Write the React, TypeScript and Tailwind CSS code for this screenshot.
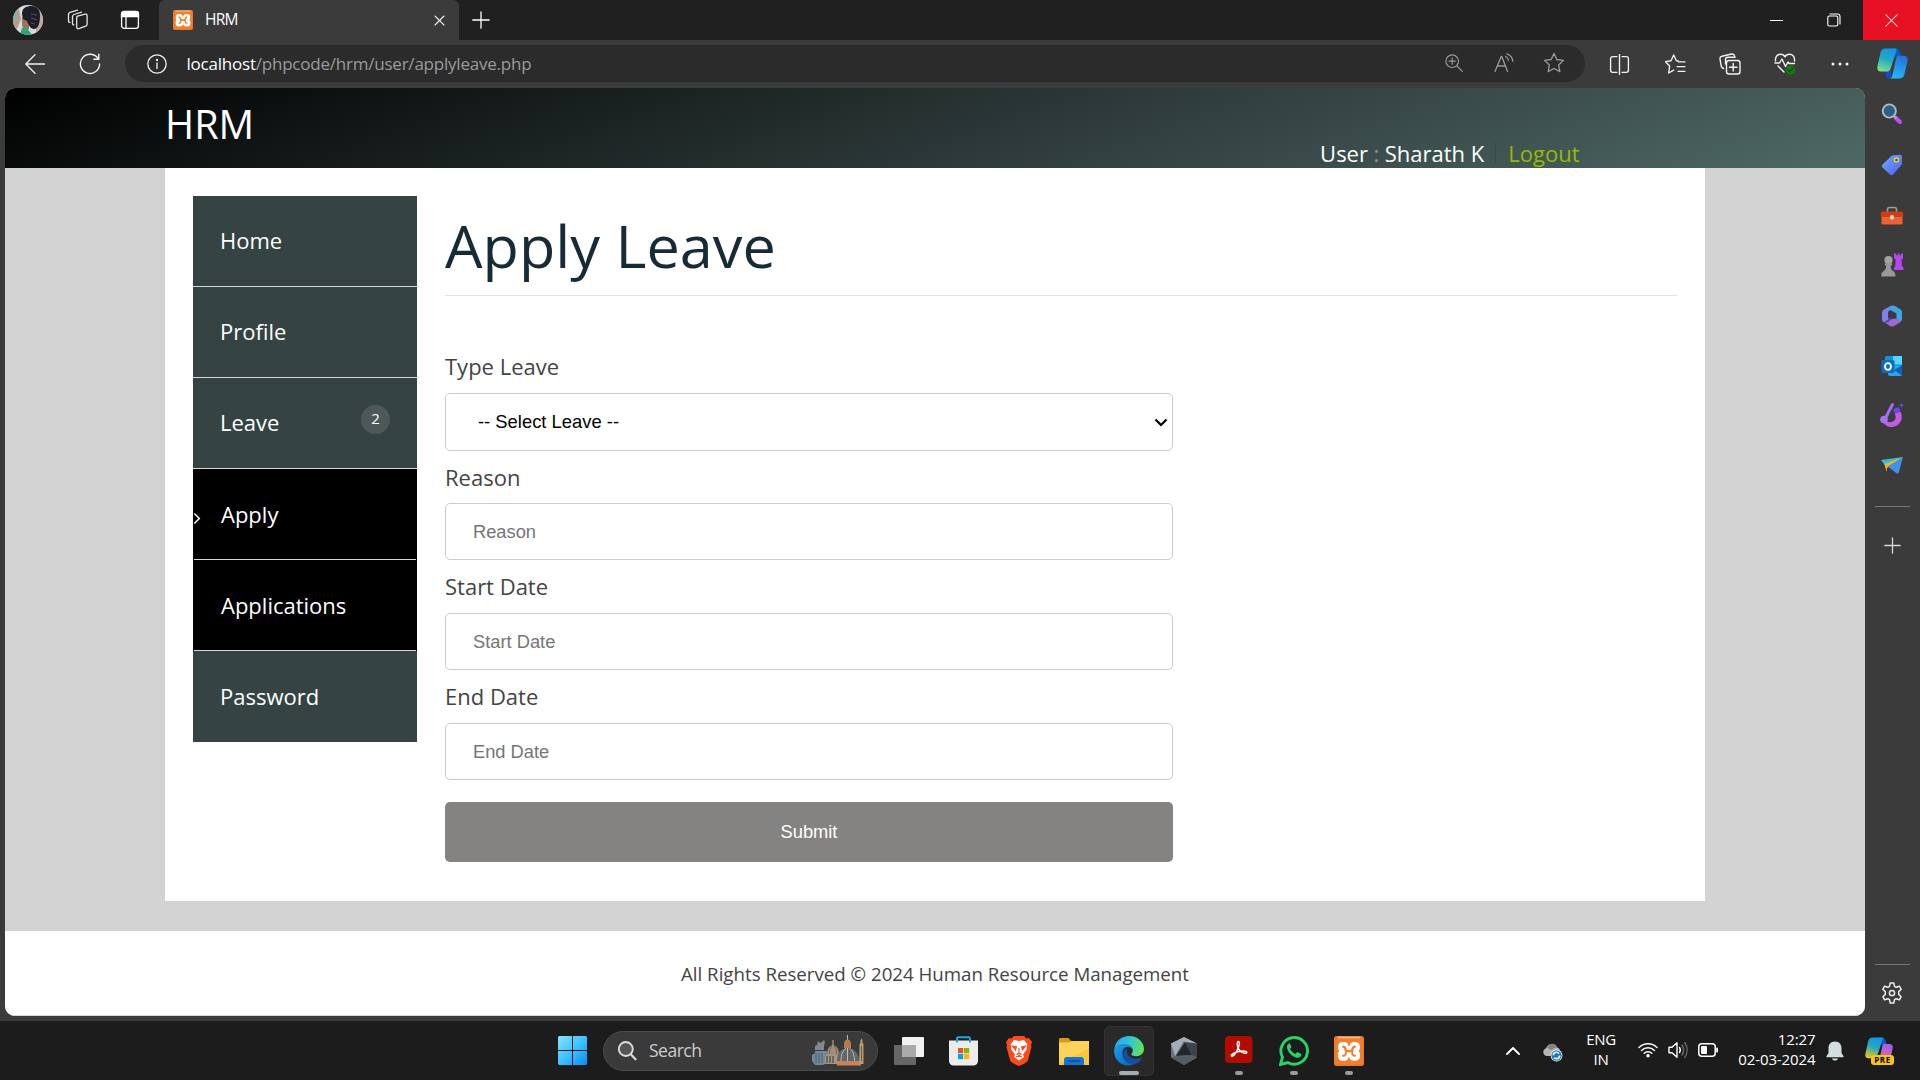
import React from "react";
import type { ReactNode } from "react";

const UI = "font-['Open_Sans','Noto_Sans',sans-serif]";

function Line({ size = 20, w = 1.2, vb = 20, className = "", children }: { size?: number; w?: number; vb?: number; className?: string; children: ReactNode }) {
  return (
    <svg width={size} height={size} viewBox={`0 0 ${vb} ${vb}`} fill="none" stroke="currentColor" strokeWidth={w} strokeLinecap="round" strokeLinejoin="round" className={`shrink-0 ${className}`}>
      {children}
    </svg>
  );
}

function XamppLogo({ size }: { size: number }) {
  return (
    <svg width={size} height={size} viewBox="0 0 30 30" className="shrink-0">
      <rect width="30" height="30" rx="2.5" fill="#e8762b" />
      <rect x="3.5" y="0.6" width="23" height="2" rx="1" fill="#f6b184" />
      <rect x="1.2" y="3" width="27.6" height="25.4" rx="2" fill="#f07f2e" />
      <g fill="#fff">
        <rect x="4.200" y="6" width="10.300" height="10.500" rx="4.500" />
        <rect x="15.500" y="6" width="10.300" height="10.500" rx="4.500" />
        <rect x="4" y="13.700" width="10.800" height="11" rx="4.500" />
        <rect x="15.200" y="13.700" width="10.800" height="11" rx="4.500" />
        <rect x="10" y="10" width="10" height="11" />
      </g>
      <g fill="none" stroke="#f07f2e" strokeWidth="2.300" strokeLinecap="round" strokeLinejoin="round">
        <path d="M9.300 10.700c1.700.3 2.500 1.600 2.500 4.500h6.400c0-2.900.8-4.200 2.500-4.500" />
        <path d="M9 19.700c1.800.2 2.800-.8 2.800-3M21 19.700c-1.800.2-2.800-.8-2.800-3" strokeWidth="2" />
      </g>
    </svg>
  );
}

function Avatar() {
  return (
    <svg width="30" height="30" viewBox="0 0 30 30" className="shrink-0">
      <defs><clipPath id="av"><circle cx="15" cy="15" r="15" /></clipPath></defs>
      <g clipPath="url(#av)">
        <rect width="30" height="30" fill="#d5dcd8" />
        <path d="M5 0l3 14-4 10L0 20V4z" fill="#b99a86" />
        <path d="M24 2l6 4v20l-7 2z" fill="#bfa79c" />
        <path d="M1 6h3v9H1z" fill="#7db1bd" />
        <path d="M9 12h7v12l-5 2-2-6z" fill="#a2705c" />
        <path d="M9 9C9 3 13 1 19 1c6 0 8 4 8 10 0 7-2 13-6 13-3 0-5-3-7-8l-4-2z" fill="#1f1d28" />
        <path d="M18 9l6 1M18 13l6 2M18 18l4 1" stroke="#54505d" strokeWidth="1" />
        <path d="M7 30l2-7 4-1 4 5 2 3z" fill="#2ba877" />
      </g>
    </svg>
  );
}

function CopilotIcon({ size, pre = false }: { size: number; pre?: boolean }) {
  const id = pre ? "cpb" : "cpa";
  return (
    <svg width={size} height={size} viewBox="0 0 30 30" className="shrink-0">
      <defs>
        <linearGradient id={`${id}1`} x1="0.6" y1="0" x2="0.3" y2="1">
          <stop offset="0" stopColor="#1596e0" /><stop offset=".45" stopColor="#22a8c4" /><stop offset="1" stopColor={pre ? "#f0c419" : "#7be08b"} />
        </linearGradient>
        <linearGradient id={`${id}2`} x1="0.6" y1="0" x2="0.3" y2="1">
          <stop offset="0" stopColor={pre ? "#a65cf0" : "#2471dd"} /><stop offset="1" stopColor={pre ? "#f4727c" : "#22baf8"} />
        </linearGradient>
      </defs>
      <path d="M14 .5h4.500c2.200 0 3 1.500 3.600 3.500L23.500 8.500H18z" fill="#0d57c4" />
      <path d="M8 22h6l-1 7.500c-3 0-3.800-1.300-4.300-3z" fill={pre ? "#e8a61c" : "#1746d2"} />
      <path d="M8 .5h9.500c1.600 0 1.600 1.200 1.200 2.500L13.300 19.500c-.7 2.200-1.800 3.300-3.800 3.300H3.800C1.200 22.800-.2 21 .4 18L3.400 4.500C4 2 5.500.5 8 .5z" fill={`url(#${id}1)`} />
      <path d="M20.500 7.500h5.700c2.600 0 4 1.800 3.400 4.800L26.600 25.500c-.6 2.500-2.100 4-4.600 4h-9.500c1.400-.5 2-1.500 2.400-3L18.500 10c.4-1.500.8-2.500 2-2.500z" fill={`url(#${id}2)`} />
    </svg>
  );
}

function TitleBar() {
  return (
    <div className="flex h-10 bg-[#202020] text-white">
      <div className="flex w-[159px] items-center">
        <div className="ml-[13px]"><Avatar /></div>
        <Line size={22} vb={22} w={1.3} className="ml-[23.5px] text-[#e4e4e4]">
          <path d="M10.500 7.200l7.600-2.100c1.200-.3 2 .4 2 1.500v8.600c0 1-.5 1.700-1.500 2l-6.700 2.500c-1.200.4-2.200-.3-2.200-1.500V9c0-1 .3-1.600.8-1.800z" />
          <path d="M7 15.800c-1 .1-1.500-.5-1.500-1.600V7.500c0-1 .5-1.700 1.500-2l7.500-2.400" />
          <path d="M3 13.400c-1 0-1.500-.5-1.500-1.500V5.300c0-1 .5-1.700 1.500-2l7.500-2.100" />
        </Line>
        <svg width="20" height="20" viewBox="0 0 20 20" fill="none" stroke="#fff" strokeWidth="1.300" className="ml-[31px]">
          <rect x="1.600" y="1.600" width="16.800" height="16.800" rx="2.600" />
          <path d="M1.500 6.500V4a2.500 2.500 0 0 1 2.500-2.500h12A2.500 2.500 0 0 1 18.500 4v2.500z" fill="#fff" />
          <path d="M6 7v11" />
        </svg>
      </div>
      <div className="flex w-[300px] items-center rounded-t-[6px] bg-[#3b3b3b] pl-[14px]">
        <XamppLogo size={20} />
        <span className="mb-[2px] ml-[12px] flex-1 text-[15.500px] leading-5 tracking-[-0.800px]">HRM</span>
        <Line size={11} vb={12} w={1.4} className="mr-[14.500px] mt-[1px]"><path d="M1.200 1.200l9.600 9.600M10.800 1.200L1.200 10.800" /></Line>
      </div>
      <div className="flex flex-1 items-center pl-[12.500px]">
        <Line size={18} vb={18} w={1.3}><path d="M9 .8v16.400M.8 9h16.400" /></Line>
      </div>
      <div className="flex w-[57px] items-center justify-center"><div className="mr-[2px] h-px w-[13px] bg-white" /></div>
      <div className="flex w-[57px] items-center justify-center">
        <Line size={14} vb={14} w={1.1} className="mr-[2px]"><rect x=".8" y="3" width="10" height="10" rx="1.500" /><path d="M3 1h7.500A2.500 2.500 0 0 1 13 3.500V11" /></Line>
      </div>
      <div className="flex w-[57px] items-center justify-center bg-[#e81123]">
        <Line size={13} vb={14} w={1.1} className="mr-px"><path d="M.8.800l12.400 12.400M13.200.800L.8 13.200" /></Line>
      </div>
    </div>
  );
}

const Star = "M10 1.300l2.600 5.500 6 .8-4.400 4.200 1.100 6L10 15l-5.300 2.800 1.100-6L1.400 7.600l6-.8z";

function ToolBar() {
  return (
    <div className="flex h-12 items-center text-[#f2f2f2]">
      <div className="flex w-[70px] justify-center">
        <Line size={20} w={1.300}><path d="M19.500 10H.8M10 .8L.8 10l9.200 9.200" /></Line>
      </div>
      <div className="mr-[15px] flex w-[40px] justify-center">
        <Line size={22} vb={22} w={1.400}><path d="M19.300 6A9.600 9.600 0 1 0 20.600 11M19.800 1.300v5h-5" /></Line>
      </div>
      <div className="mt-[-2px] flex h-[37px] w-[1460px] items-center rounded-full bg-[#2b2b2b]">
        <Line size={20} w={1.300} className="ml-[22px] mt-[1px]"><circle cx="10" cy="10" r="9.200" /><path d="M10 9v5.500" /><circle cx="10" cy="6" r=".5" fill="currentColor" /></Line>
        <div className="ml-[19.500px] mt-[1px] flex-1 text-[17px] leading-6 tracking-[-0.220px] text-[#9b9b9b]">
          <span className="text-white">localhost</span>/phpcode/hrm/user/applyleave.php
        </div>
        <div className="flex w-[50px] justify-center text-[#9a9a9a]"><Line size={18} vb={20} w={1.300}><circle cx="8" cy="8" r="7" /><path d="M13.300 13.300l6 6M8 4.500v7M4.500 8h7" /></Line></div>
        <div className="flex w-[50px] justify-center text-[#9a9a9a]"><Line size={20} w={1.300}><path d="M1 18.500L7.200 3.500h.6L13.500 18.500M3.200 13h8.500M11.500 3.500c1.800.8 2.600 2 2.800 3.800M13 .8c3.400 1.200 5.400 3.800 5.800 7.500" /></Line></div>
        <div className="mr-[6px] flex w-[50px] justify-center text-[#9a9a9a]"><Line size={22} w={1.200}><path d={Star} /></Line></div>
      </div>
      <div className="ml-[6.500px] flex w-[56px] justify-center"><Line size={21} w={1.300}><path d="M7.500 2.500H3.500a2 2 0 0 0-2 2v11a2 2 0 0 0 2 2h4M12.500 2.500h4a2 2 0 0 1 2 2v11a2 2 0 0 1-2 2h-4M10 .5v19" /></Line></div>
      <div className="flex w-[55px] justify-center"><Line size={21} w={1.300}><path d="M12.600 6.700l-1.700-.3L8.300.9 5.700 6.400l-5.200.9 3.900 4.200-.9 6.600 4.800-2.700M13 7.500h6M11.500 12h7.500M12.500 16.500h6.500" /></Line></div>
      <div className="flex w-[55px] justify-center">
        <Line size={22} vb={22} w={1.400}><rect x="7.500" y="7.500" width="13.500" height="13.500" rx="2.500" /><path d="M14.200 10.500v7.500M10.500 14.200H18M4.500 15.500C3 15 2.500 14 2.200 13L1 6C.8 4.500 1.500 3.500 3 3.200L12.500 1c1.500-.3 2.500.3 3 1.800l.3.700M6.500 11V6.700a2.500 2.500 0 0 1 2.500-2.500h7" /></Line>
      </div>
      <div className="flex w-[55px] justify-center">
        <svg width="22" height="22" viewBox="0 0 22 22" fill="none" stroke="currentColor" strokeWidth="1.400" strokeLinejoin="round" strokeLinecap="round">
          <path d="M1.500 8C1 3.500 3.500 1.300 6.500 1.300 9 1.300 10.300 2.500 11 3.800c.7-1.300 2-2.500 4.500-2.500 3 0 5.500 2.200 5 6.700M1 10h4.500L8 6l3.500 7.500L14 9l1 1.500h5.500M4 13l6 6" />
          <circle cx="16.500" cy="17" r="4.600" fill="#107c10" stroke="none" /><path d="M14.300 17l1.600 1.600 2.800-3" stroke="#0a4f0a" />
        </svg>
      </div>
      <div className="flex w-[55px] justify-center"><Line size={20}><g fill="currentColor" stroke="none"><circle cx="3" cy="10" r="1.500" /><circle cx="10" cy="10" r="1.500" /><circle cx="17" cy="10" r="1.500" /></g></Line></div>
      <div className="mb-[1px] ml-[9.500px]"><CopilotIcon size={31} /></div>
    </div>
  );
}

function EdgeSidebar() {
  const icons: ReactNode[] = [
    <svg key="s" width="22" height="22" viewBox="0 0 22 22"><path d="M14.500 14.500l4.500 4.500" stroke="#c24cf2" strokeWidth="4" strokeLinecap="round" /><path d="M12.500 12.500l3 3" stroke="#a9a9a9" strokeWidth="2" /><circle cx="8.300" cy="8" r="6.600" fill="#26618a" stroke="#b9b9b9" strokeWidth="1.900" /></svg>,
    <svg key="t" width="22" height="22" viewBox="0 0 22 22" className="mt-[2px]"><defs><linearGradient id="tg" x1="0" y1="0" x2="1" y2="1"><stop stopColor="#6cb2fb" /><stop offset="1" stopColor="#5258f5" /></linearGradient></defs><path d="M11 1.500L19 .8c1.500 0 2 .8 2 2v7.500L12 20.500c-1 1-2 1-3 0L1.500 13.500c-1-1-.8-2 0-3z" fill="url(#tg)" /><circle cx="15.500" cy="6" r="2" fill="#4a4a28" stroke="#f5d11c" strokeWidth="1.500" /></svg>,
    <svg key="b" width="24" height="20" viewBox="0 0 24 20" className="mt-[3px]"><path d="M7.500 6V3.500C7.500 2 8 1.500 9.500 1.500h5c1.500 0 2 .5 2 2V6" fill="none" stroke="#9c9c9c" strokeWidth="1.600" /><rect x="1.500" y="9" width="21" height="9.500" rx="1.600" fill="#ec6236" /><rect x=".8" y="5.500" width="22.400" height="5.500" rx="1.500" fill="#cd3f13" /><rect x="10" y="9" width="4" height="4.500" rx="1.500" fill="#cfcfcf" /></svg>,
    <svg key="c" width="24" height="24" viewBox="0 0 24 24"><path d="M14 .5h2v1.800h1.500V.5h2v1.800H21V.5h2v4.800l-1.500 1.500.5 6.700 1.500 1V17H14v-2.500l1.200-1 .5-6.700L14 5.300z" fill="#b446ee" /><circle cx="8.500" cy="7" r="4.100" fill="#a3a3a3" /><path d="M4.800 10.200h7.400v1.900l-1.500.6c0 3 .8 4.500 3.300 6l1.300 2.100V23.500H1.300v-2.700L2.700 18.700c2.500-1.500 3.500-3 3.500-6l-1.400-.6z" fill="#999" /></svg>,
    <svg key="m" width="22" height="22" viewBox="0 0 22 22" className="mt-[2px]"><path d="M10.500.5L3 4.500C1.500 5.500 1 6.500 1 8v6c0 2 1 3 2.500 3.500L7 15V8c0-1 .3-1.800 1.200-2.300L14 2.300z" fill="#7b83e8" /><path d="M11 .5c1-.3 2 0 3 .5l5 3c1.500 1 2 2 2 3.500V14c0 1-.5 2-1.500 2.500l-4-2.500V8.500L7.500 4z" fill="#3da5e8" /><path d="M3 17c1.500.8 3 .5 4-.5l4.500-2.700h4L20 16c-.5 1-1 1.300-2 2l-5 3c-1.500.8-2.500.8-4 0z" fill="#9b6bd0" /><path d="M3 17c1.500.8 3 .5 4.500-.5L11 14l-4-2v3z" fill="#5b46a8" /></svg>,
    <svg key="o" width="22" height="22" viewBox="0 0 22 22" className="mt-[2px]"><rect x="4" y="1" width="17" height="17" rx="1.500" fill="#1490df" /><rect x="12" y="1" width="9" height="8.500" fill="#50d9ff" /><path d="M7 11h14v8.500a1.500 1.500 0 0 1-1.500 1.500H9a2 2 0 0 1-2-2z" fill="#28a8ea" /><path d="M21 10.500v10L13 15z" fill="#0a62b0" /><rect x=".5" y="5" width="13" height="13" rx="1.500" fill="#0f6cbd" /><ellipse cx="7" cy="11.500" rx="3" ry="3.400" fill="none" stroke="#fff" strokeWidth="1.900" /></svg>,
    <svg key="d" width="24" height="26" viewBox="0 0 24 26"><path d="M5 18c2.500 3 8 3 10-.5 1.200-2 .7-4-.5-6l6-2c3.500 7-.5 14.500-8 15.500-4 .5-8-2-10-5.500z" fill="#c35ae8" /><path d="M12.500 2.500L5.500 16" stroke="#a36af4" strokeWidth="3" strokeLinecap="round" /><circle cx="4" cy="17.500" r="3.800" fill="#a873f0" /><path d="M13.500 7l5-2 2 4-4 2-3-1z" fill="#7246e6" /><path d="M21.500.5l.8 2 1.700.8-1.700.8-.8 2-.8-2-2-.8 2-.8z" fill="#6a4bea" /></svg>,
    <svg key="p" width="22" height="18" viewBox="0 0 22 18" className="mt-[2px]"><path d="M0 3l22-3-9 4.500-9 4z" fill="#35b9dc" /><path d="M3.500 7L22 0 6 11l-.5 4z" fill="#f6b61b" /><path d="M22 0L6.500 9.500 16 16.500c1 .4 1.500 0 1.800-1z" fill="#3e92ec" /></svg>,
  ];
  return (
    <div className="flex w-[54px] flex-col items-center text-[#d8d8d8]">
      <div className="flex flex-col pt-[1px]">
        {icons.map((ic, i) => (
          <div key={i} className="flex h-[50.200px] w-[54px] items-center justify-center">{ic}</div>
        ))}
      </div>
      <div className="mt-[15px] h-px w-[35px] bg-[#777]" />
      <Line size={17} vb={17} w={1.300} className="mt-[30px]"><path d="M8.500.8v15.400M.8 8.500h15.400" /></Line>
      <div className="mt-auto h-px w-[35px] bg-[#777]" />
      <Line size={22} vb={22} w={1.500} className="mb-[17px] mt-[17px] text-[#ececec]">
        <path d="M9.200 1h3.600l.7 3.300 1.700 1 3.200-1.100 1.800 3.100-2.500 2.300v2.800l2.500 2.300-1.800 3.100-3.200-1.100-1.700 1-.7 3.300H9.200l-.7-3.300-1.700-1-3.200 1.100-1.800-3.100 2.500-2.300V9.600L1.800 7.300l1.800-3.100 3.200 1.100 1.700-1z" /><circle cx="11" cy="11" r="2.600" />
      </Line>
    </div>
  );
}

const nav = [
  { label: "Home" },
  { label: "Profile" },
  { label: "Leave", badge: "2" },
  { label: "Apply", sub: true, current: true },
  { label: "Applications", sub: true },
  { label: "Password", last: true },
];

function SideNav() {
  return (
    <nav className="h-[546px] w-[224px] bg-[#354443]">
      {nav.map((n) => (
        <div key={n.label} className={n.sub ? "bg-black px-px" : ""}>
          <div className={`relative flex h-[91px] items-center text-[22px] text-white ${n.sub ? "pl-[27px] pt-[1px]" : "pl-[27px]"} ${n.last ? "" : "border-b border-[#d3dad8]"} ${!n.sub && !n.last ? "pb-[2px]" : ""}`}>
            {n.current && (
              <svg width="7" height="13" viewBox="0 0 7 13" className="absolute left-0 top-[43px]" fill="none" stroke="#fff" strokeWidth="1.500"><path d="M.3 1.500l5 5-5 5" /></svg>
            )}
            <span>{n.label}</span>
            {n.badge && (
              <span className="absolute right-[27px] top-[27px] flex size-[29px] items-center justify-center rounded-full bg-[#4d5958] pb-[2px] text-[15px] leading-none">{n.badge}</span>
            )}
          </div>
        </div>
      ))}
    </nav>
  );
}

function Page() {
  const field = "h-[57px] w-[728px] rounded-[5px] border border-[#ccc] bg-white px-[27px] font-['Liberation_Sans',Arial,sans-serif] text-[18.300px] text-black placeholder:text-[#757575]";
  const label = "block h-[53px] pt-[10px] text-[22px] leading-[33px] text-[#444]";
  return (
    <div className="flex h-[928px] w-[1860px] flex-col overflow-hidden rounded-[10px] bg-[#d3d3d3] font-['Open_Sans','Noto_Sans',sans-serif]">
      <header className="flex h-20 shrink-0 justify-between bg-[linear-gradient(160deg,#000_0%,#354443_65%,#4e6965_100%)] pl-[160px] pr-[285.500px]">
        <div className="pt-[9px] text-[39.600px] leading-[54px] text-white">HRM</div>
        <div className="flex h-[30px] translate-y-[50px] items-center text-[22px] leading-[30px] text-white">
          <span>User</span><span className="mx-[5.500px] text-[#8b9a98]">:</span><span>Sharath K</span>
          <span className="ml-[11px] mr-[12px] h-[22px] w-px bg-[#3f4746]" />
          <span className="text-[#99b800]">Logout</span>
        </div>
      </header>
      <main className="ml-[160px] flex h-[733px] w-[1540px] shrink-0 bg-white pl-[28px] pt-[28px]">
        <SideNav />
        <section className="ml-[28px] w-[1232px]">
          <h1 className="h-[100px] border-b border-[#e2e2e2] pt-[9px] text-[59.400px] leading-[80px] text-[#172b37]">Apply Leave</h1>
          <form className="mt-[44px] flex flex-col" onSubmit={(e) => e.preventDefault()}>
            <label className={label}>Type Leave</label>
            <div className="flex h-[58px] w-[728px] items-center justify-between rounded-[5px] border border-[#ccc] pl-[32px] pr-[4px] font-['Liberation_Sans',Arial,sans-serif] text-[18.400px] text-black">
              <span>-- Select Leave --</span>
              <svg width="14" height="9" viewBox="0 0 14 9" fill="none" stroke="#000" strokeWidth="2.200"><path d="M1.500 1.500L7 7l5.500-5.500" /></svg>
            </div>
            <label className={label + " -mb-px"}>Reason</label>
            <input className={field} placeholder="Reason" />
            <label className={label}>Start Date</label>
            <input className={field} placeholder="Start Date" />
            <label className={label}>End Date</label>
            <input className={field} placeholder="End Date" />
            <button className="mt-[22px] h-[60px] w-[728px] rounded-[5px] bg-[#858381] font-['Liberation_Sans',Arial,sans-serif] text-[18.300px] text-white">Submit</button>
          </form>
        </section>
      </main>
      <footer className="mt-[30px] flex flex-1 items-center justify-center border-b border-[#cfdad8] bg-white pt-[2px] text-[18.700px] text-[#444]">
        All Rights Reserved © 2024 Human Resource Management
      </footer>
    </div>
  );
}

function SearchArt() {
  return (
    <svg width="54" height="31" viewBox="0 0 54 31" className="shrink-0">
      <path d="M1 20l3-2V16h12v12l-4 2H4l-3-4z" fill="#71899a" /><path d="M4 15v-4l2-1 1-4 2 2 2-1 2-2 1 2-1 4v4z" fill="#85888e" />
      <path d="M5 18v10M8 18v10M11 18v10" stroke="#49606f" strokeWidth="1" />
      <path d="M16 20c0-6 2-9 6-10 4 1 6 4 6 10z" fill="#a38d7c" /><path d="M18.500 19c0-5 1-7 3-8.500M25.500 19c0-5-1-7-3-8.500" fill="none" stroke="#5f5a55" strokeWidth=".8" /><path d="M21.500 5h1v6h-1z" fill="#cfb08d" /><path d="M14 20h15v9H14z" fill="#a6957f" />
      <path d="M16 21v7M19 21v7M22 21v7" stroke="#4c4f52" strokeWidth="1.300" />
      <path d="M36 0h1v6h-1z" fill="#c9b79a" /><path d="M33 9c0-3 1.500-4.500 3.500-4.500S40 6 40 9v4h-7z" fill="#b9794b" /><path d="M26 26c0-8 4-13 10.500-13S48 18 48 26z" fill="#5f686c" />
      <path d="M30 26c0-6 2-11 5-12.500M36.500 13v13M43.500 26c0-6-2-11-5-12.500" fill="none" stroke="#c3b8a3" strokeWidth="1" />
      <path d="M25 26h25v4.500H26z" fill="#c88356" /><path d="M48.500 14V9l1-1V5l1-1.500 1 1.500v3l1 1v20h-4.500z" fill="#bd9c68" /><path d="M50.500 11v15" stroke="#6b5d45" />
    </svg>
  );
}

function TaskIcon({ children, active = false, dot = false }: { children: ReactNode; active?: boolean; dot?: boolean }) {
  return (
    <div className="flex w-[55px] justify-center">
      <div className={`relative flex size-[50px] items-center justify-center rounded-[5px] ${active ? "border border-[#333] bg-[#292929]" : ""}`}>
        {children}
        {active && <span className="absolute bottom-0 h-1 w-5 rounded-full bg-[#9fb0b5]" />}
        {dot && <span className="absolute bottom-[1px] h-1 w-2 rounded-full bg-[#9a9a9a]" />}
      </div>
    </div>
  );
}

function TaskBar() {
  return (
    <div className="flex h-[59px] items-center bg-[#1c1c1c] pl-[545px] text-white">
      <TaskIcon>
        <svg width="29" height="29" viewBox="0 0 29 29"><defs><linearGradient id="wg" gradientUnits="userSpaceOnUse" x1="0" y1="0" x2="29" y2="29"><stop stopColor="#8be2ff" /><stop offset=".5" stopColor="#3cc3fd" /><stop offset="1" stopColor="#0a8cf8" /></linearGradient></defs><path fill="url(#wg)" d="M1 0h13v14H0V1zM15 0h13l1 1v13H15zM0 15h14v14H1l-1-1zM15 15h14v13l-1 1H15z" /></svg>
      </TaskIcon>
      <div className="ml-[3px] mr-[3px] flex h-10 w-[275px] items-center rounded-full border border-[#4c4c4c] bg-[#3a3a3a] pl-[13px] pr-[12px]">
        <Line size={20} w={1.900} className="text-[#dcdcdc]"><circle cx="8.800" cy="8" r="7" fill="#555" /><path d="M13.800 13.300l4.700 5" strokeWidth="2.200" /></Line>
        <span className="ml-[12px] flex-1 text-[17.500px] tracking-[-0.500px] text-[#cdcdcd]">Search</span>
        <SearchArt />
      </div>
      <TaskIcon>
        <svg width="30" height="28" viewBox="0 0 30 28"><rect x="8" y="0" width="22" height="20" rx="1" fill="#f2f2f2" /><rect x="0" y="8" width="22" height="20" rx="1" fill="#666" /><rect x="8" y="8" width="14" height="12" fill="#aaa" /></svg>
      </TaskIcon>
      <TaskIcon>
        <svg width="29" height="30" viewBox="0 0 29 30" className="mr-px"><path d="M0 4.500h29V25a4.500 4.500 0 0 1-4.500 4.500h-20A4.500 4.500 0 0 1 0 25z" fill="#ececec" /><path d="M8 6.500V2.500C8 1.600 8.400 1.200 9.300 1.200h10.400c.9 0 1.300.4 1.300 1.300v4" fill="none" stroke="#18a6ec" strokeWidth="2" /><path fill="#f25022" d="M9 12h5.200v5.200H9z" /><path fill="#7fba00" d="M15 12h5.200v5.200H15z" /><path fill="#00a4ef" d="M9 18h5.200v5.200H9z" /><path fill="#ffb900" d="M15 18h5.200v5.200H15z" /></svg>
      </TaskIcon>
      <TaskIcon>
        <svg width="26" height="30" viewBox="0 0 26 30"><path d="M8 0h10l2.500 2.500L23 2l3 4-1 3 .5 2-3.500 13c-.5 2-4 4-9 6-5-2-8.500-4-9-6L.5 11 1 9 0 6l3-4 2.500.5z" fill="#fb4a1e" /><path d="M13 5l5-1 3.500 4.500-1 3 .5 1.500-4 5.500 1 2.500-5 3.500-5-3.500 1-2.500-4-5.500.5-1.500-1-3L8 4z" fill="#fff" /><path d="M6.500 10l4 1-1 3zM19.500 10l-4 1 1 3zM13 12v5M10.500 18.500L13 17l2.500 1.500M10 21l3-1.500 3 1.500" fill="#fb4a1e" stroke="#fb4a1e" strokeWidth="1.100" /></svg>
      </TaskIcon>
      <TaskIcon>
        <svg width="30" height="28" viewBox="0 0 30 28"><path d="M0 2.500C0 1.500.6 1 1.500 1h8l2.500 3v3H0z" fill="#d99b0c" /><path d="M0 5.500h10.500L12.500 4H30v24H0z" fill="#fbc63c" /><path d="M0 5.500h10.500L12.500 4H30v7L6 24l-6 2z" fill="#ffdb6b" opacity=".6" /><path d="M5 28v-5c0-2 1-3 3-3h14c2 0 3 1 3 3v5z" fill="#1377d1" /><path d="M8.500 24h13" stroke="#0b4f95" strokeWidth="1.600" /></svg>
      </TaskIcon>
      <TaskIcon active>
        <svg width="30" height="30" viewBox="0 0 30 30"><defs><linearGradient id="e1" x1="0" y1=".3" x2="1" y2=".5"><stop stopColor="#2aa5ee" /><stop offset=".5" stopColor="#32c6d0" /><stop offset="1" stopColor="#67e15a" /></linearGradient><linearGradient id="e2" x1="0" y1="0" x2="1" y2="1"><stop stopColor="#1ca0e8" /><stop offset="1" stopColor="#0a62bd" /></linearGradient></defs>
          <path d="M.3 13C1.300 5 7.500 0 15 0c9 0 15 6.300 15 12.800 0 4.700-3.700 7.400-7.700 7.400-3.500 0-5-1.200-5-2 0-.7 1.500-1.500 1.500-4 0-2.700-3-5.200-7.500-5.200C6.500 9 2.500 11 .3 13z" fill="url(#e1)" />
          <path d="M0 14.500C.5 10 5 8 10 8c5.500 0 8.800 3 8.800 6.200-.8-2-3-3.200-5.300-3.200-3 0-5 2.500-5 6 0 6 5 11 11 11.500C12 32 0 27 0 14.500z" fill="url(#e2)" />
          <path d="M13.500 12.500c-3 1-4.500 4-4 7.500.8 5 6 9 11 8.300 3.500-1 6-3.500 7.300-5.800.3-.6-.3-.8-.8-.6C22 24 14 22.500 13 17c-.3-1.800 0-3.300.5-4.500z" fill="#1350a0" /></svg>
      </TaskIcon>
      <TaskIcon>
        <svg width="26" height="28" viewBox="0 0 26 28"><path d="M13 0l13 6.500v14L13 28 0 20.500v-14z" fill="#68717c" /><path d="M13 0l13 6.500L18 9 13 4 4 19 0 6.500z" fill="#a5adb8" /><path d="M14 5l7 13-16 1z" fill="#23262b" /><path d="M5 19l16-1 5 2.500L13 28 0 20.500z" fill="#555d67" /><path d="M26 6.500v14L21 18 14 5z" fill="#3d434b" /></svg>
      </TaskIcon>
      <TaskIcon dot>
        <svg width="28" height="27" viewBox="0 0 28 27" className="mb-[3px]"><rect width="27.500" height="27" rx="4" fill="#b30b00" /><path d="M6.500 20c-.8-1.500 3-4 9-4.800 4-.5 6.500.2 6.300 1.300-.3 1.500-4 .8-6.300-1.200-2.500-2-4-6.500-3-9 .5-1.200 1.900-.8 1.900.8 0 3.800-5.200 14.600-7.900 12.900z" fill="none" stroke="#fff" strokeWidth="1.500" /></svg>
      </TaskIcon>
      <TaskIcon dot>
        <svg width="30" height="30" viewBox="0 0 30 30"><path d="M1.500 28.500l2-7.300A13.300 13.300 0 1 1 8.800 26.500z" fill="#1c1c1c" stroke="#25d366" strokeWidth="2.900" /><path d="M10.500 7.500c-1 0-3 1.500-2.500 4.500.8 4 5 8.500 9.500 9.700 2.500.5 4.500-.7 4.800-2.700.1-.7 0-1-.5-1.200l-3-1.500c-.5-.2-.8-.1-1.200.3l-1.100 1.300c-2.800-1-4.300-2.700-5.500-4.800l1.200-1.600c.2-.3.200-.6.100-1l-1.200-2.600c-.2-.4-.4-.4-.6-.4z" fill="#25d366" /></svg>
      </TaskIcon>
      <TaskIcon dot><XamppLogo size={30} /></TaskIcon>

      <div className="flex flex-1 items-center">
        <Line size={14} vb={14} w={1.900} className="ml-[129.500px]"><path d="M1 10l6-6 6 6" /></Line>
        <svg width="21" height="19" viewBox="0 0 21 19" className="ml-[22px] mt-[4px]"><path d="M4.500 13A4 4 0 0 1 4 5.300 6 6 0 0 1 15 4.500c2 .5 3 1.500 3 4V13z" fill="#b4b4b4" /><path d="M5 4.500A5.500 5.500 0 0 1 15.500 4.500c-3-.8-5 3-7 2.500z" fill="#848484" /><circle cx="14.500" cy="12.500" r="5.900" fill="#fff" /><circle cx="14.500" cy="12.500" r="5.200" fill="#1f78c8" /><circle cx="14.500" cy="12.500" r="3.200" fill="#1f78c8" stroke="#fff" strokeWidth="1.500" strokeDasharray="7.500 2.500" /></svg>
        <div className="mb-[3px] ml-[18.500px] w-[40px] text-center text-[15px] leading-5 tracking-[-0.300px]">ENG<br />IN</div>
        <svg width="20" height="16" viewBox="0 0 20 16" fill="none" stroke="#fff" strokeWidth="1.500" strokeLinecap="round" className="mb-[2px] ml-[16.500px]"><path d="M1 5.500a12.800 12.800 0 0 1 18 0M3.500 8.500a9.200 9.200 0 0 1 13 0M6.200 11.300a5.400 5.400 0 0 1 7.600 0" /><circle cx="10" cy="13.700" r="1" fill="#fff" /></svg>
        <svg width="21" height="18" viewBox="0 0 21 18" fill="none" stroke="#fff" strokeWidth="1.400" strokeLinecap="round" strokeLinejoin="round" className="mb-[2px] ml-[10px]"><path d="M1 6.200h3l5-4.500v14.600l-5-4.500H1z" /><path d="M11.500 6.500c1 1.500 1 3.500 0 5" /><path d="M14 4c2 3 2 7 0 10M16.800 1.500c3 4.500 3 10.500 0 15" stroke="#6b6b6b" /></svg>
        <svg width="20" height="14" viewBox="0 0 20 14" className="mb-[1px] ml-[9px]"><rect x=".8" y=".8" width="16.400" height="12.400" rx="3" fill="none" stroke="#fff" strokeWidth="1.500" /><rect x="3" y="3" width="6" height="8" rx="1" fill="#fff" /><rect x="18.200" y="4.500" width="1.800" height="5" rx=".8" fill="#fff" /></svg>
        <div className="mb-[4px] ml-[9px] w-[89px] text-right text-[15px] leading-5 tracking-[-0.100px]">12:27<br />02-03-2024</div>
        <svg width="18" height="20" viewBox="0 0 18 20" className="ml-[10px]"><path d="M9 .5c4 0 6.500 2.800 6.500 6.500v5l2 3.200c.2.600 0 1-.6 1H1.100c-.6 0-.8-.4-.6-1L2.500 12V7C2.500 3.300 5 .5 9 .5zM6 17.500h6c-.5 1.500-1.500 2-3 2s-2.500-.5-3-2z" fill="#d3dede" /></svg>
        <div className="relative ml-[21.500px]">
          <CopilotIcon size={28} pre />
          <span className="absolute bottom-[0px] right-[-1px] flex h-[10px] w-[23px] items-center justify-center rounded-[3px] bg-[#fcc40f] text-[8px] font-bold leading-none tracking-[0.500px] text-black">PRE</span>
        </div>
      </div>
    </div>
  );
}

export default function App() {
  return (
    <div className={`flex h-[1080px] w-[1920px] flex-col overflow-hidden bg-[#3b3b3b] ${UI}`}>
      <TitleBar />
      <ToolBar />
      <div className="flex h-[933px] pl-[5px]">
        <Page />
        <EdgeSidebar />
      </div>
      <TaskBar />
    </div>
  );
}
